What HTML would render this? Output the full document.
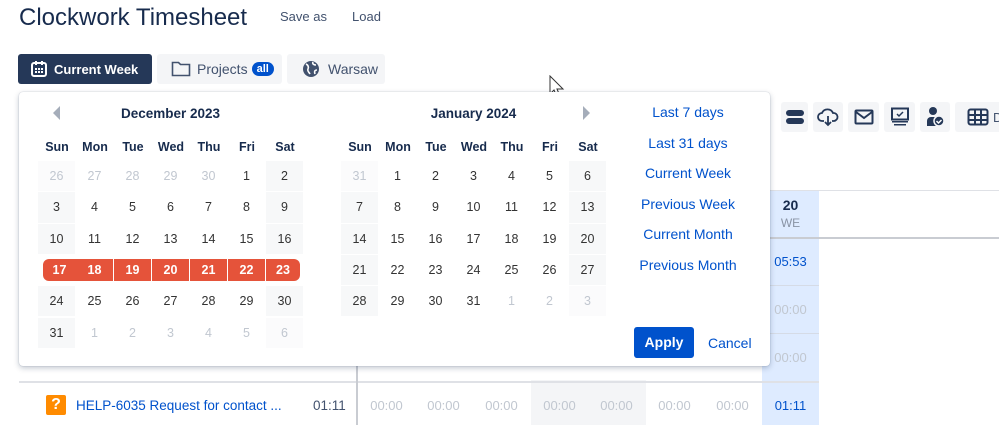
<!DOCTYPE html>
<html><head><meta charset="utf-8"><style>
*{box-sizing:border-box;margin:0;padding:0}
body{width:999px;height:425px;overflow:hidden;background:#fff;font-family:"Liberation Sans",sans-serif;position:relative;color:#172b4d}
.a{position:absolute}
.btn{position:absolute;top:54px;height:30px;border-radius:3px;background:#f4f5f7;font-size:14px;color:#42526e;display:flex;align-items:center;padding-left:12px}
.ib{position:absolute;top:102px;height:30px;width:30px;background:#f4f5f7;border-radius:3px;display:flex;align-items:center;justify-content:center}
.cell{position:absolute;display:flex;align-items:center;justify-content:center;font-size:12.5px;color:#333}
.hd{position:absolute;font-size:12.5px;font-weight:bold;color:#172b4d;width:38px;text-align:center;top:140px}
.lk{position:absolute;left:622px;width:132px;text-align:center;font-size:14px;color:#0052cc}
.t{position:absolute;font-size:13px;color:#c1c7d0;width:57px;text-align:center}
</style></head><body>
<div class="a" style="left:19px;top:4px;font-size:24px;color:#172b4d">Clockwork Timesheet</div>
<div class="a" style="left:280px;top:9px;font-size:13px;color:#42526e">Save as</div>
<div class="a" style="left:352px;top:9px;font-size:13px;color:#42526e">Load</div>
<div class="btn" style="left:18px;width:134px;background:#253858;color:#fff;font-weight:bold;font-size:13px">
<svg width="18" height="18" viewBox="0 0 18 18" style="margin-right:6px"><rect x="2" y="3" width="14" height="13" rx="2" fill="none" stroke="#fff" stroke-width="2"/><rect x="5" y="1" width="2" height="4" fill="#fff"/><rect x="11" y="1" width="2" height="4" fill="#fff"/><g fill="#fff"><rect x="5" y="8" width="2" height="2"/><rect x="8" y="8" width="2" height="2"/><rect x="11" y="8" width="2" height="2"/><rect x="5" y="11" width="2" height="2"/><rect x="8" y="11" width="2" height="2"/><rect x="11" y="11" width="2" height="2"/></g></svg>Current Week</div>
<div class="btn" style="left:157px;width:125px;padding-left:14px">
<svg width="20" height="18" viewBox="0 0 20 18" style="margin-right:6px"><path d="M1.5 2.5h6l2 2h9v11h-17z" fill="none" stroke="#42526e" stroke-width="1.6"/></svg>Projects<span style="background:#0052cc;color:#fff;border-radius:8px;font-size:11px;font-weight:bold;padding:1px 5px;margin-left:4px">all</span></div>
<div class="btn" style="left:287px;width:98px;padding-left:15px">
<svg width="18" height="18" viewBox="0 0 18 18" style="margin-right:8px"><circle cx="9" cy="9" r="8" fill="#42526e"/><path d="M4 4c2 1 3 3 2 5s1 3 2 5M11 2c-1 2 1 3 3 3M15 10c-2 0-3 1-2 4" stroke="#fff" stroke-width="1.6" fill="none"/></svg>Warsaw</div>
<svg class="a" style="left:549px;top:75px" width="16" height="24" viewBox="0 0 16 24"><path d="M1 1v18l4-4 3 7 3-1-3-7h6z" fill="#fff" stroke="#333" stroke-width="1"/></svg>
<div class="ib" style="left:781px;width:27px"><svg width="20" height="16"><rect x="1" y="1" width="18" height="6" rx="3" fill="#253858"/><rect x="1" y="9" width="18" height="6" rx="3" fill="#253858"/></svg></div>
<div class="ib" style="left:813px"><svg width="22" height="20" viewBox="0 0 22 20"><path d="M7 14H5a4 4 0 0 1 0-8 6 6 0 0 1 11 0 4 4 0 0 1 1 8h-2" fill="none" stroke="#253858" stroke-width="1.8"/><path d="M11 9v9M8 15l3 3 3-3" fill="none" stroke="#253858" stroke-width="1.8"/></svg></div>
<div class="ib" style="left:848px;width:31px"><svg width="20" height="16"><rect x="1.5" y="1.5" width="17" height="13" rx="1" fill="none" stroke="#253858" stroke-width="2"/><path d="M2 3l8 6 8-6" fill="none" stroke="#253858" stroke-width="2"/></svg></div>
<div class="ib" style="left:884px;width:31px"><svg width="20" height="20"><rect x="2" y="1.5" width="16" height="11" fill="none" stroke="#253858" stroke-width="2"/><path d="M7 7l2 2 4-4" stroke="#253858" fill="none" stroke-width="1.5"/><rect x="2" y="14" width="16" height="1.5" fill="#253858"/><rect x="4" y="17" width="12" height="1.5" fill="#253858"/></svg></div>
<div class="ib" style="left:920px"><svg width="20" height="22"><circle cx="8" cy="5" r="4" fill="#253858"/><path d="M2 20v-5a4 4 0 0 1 4-4h5v9z" fill="#253858"/><circle cx="14" cy="15" r="5" fill="#253858" stroke="#f4f5f7" stroke-width="1.5"/><path d="M11.5 15l2 2 3-3" stroke="#fff" fill="none" stroke-width="1.5"/></svg></div>
<div class="ib" style="left:955px;width:50px;justify-content:flex-start;padding-left:12px"><svg width="22" height="18"><rect x="1.5" y="1.5" width="19" height="15" rx="2" fill="none" stroke="#253858" stroke-width="2"/><path d="M1 7h20M1 12h20M8 2v14M14 2v14" stroke="#253858" stroke-width="2"/></svg><span style="font-size:13px;color:#42526e;margin-left:4px">D</span></div>
<div class="a" style="left:762px;top:190px;width:57px;height:235px;background:#deebff"></div>
<div class="a" style="left:531px;top:380px;width:115px;height:45px;background:#f4f5f7"></div>
<div class="a" style="left:770px;top:190px;width:229px;height:1px;background:#dfe1e6"></div>
<div class="a" style="left:770px;top:237px;width:229px;height:2px;background:#c9ccd2"></div>
<div class="a" style="left:770px;top:285px;width:49px;height:1px;background:#d5dbe6"></div>
<div class="a" style="left:770px;top:333px;width:49px;height:1px;background:#d5dbe6"></div>
<div class="a" style="left:19px;top:381px;width:800px;height:2px;background:#dfe1e6"></div>
<div class="a" style="left:356px;top:360px;width:2px;height:65px;background:#c9ccd2"></div>
<div class="a" style="left:762px;top:197px;width:57px;text-align:center;font-size:14px;font-weight:bold;color:#172b4d">20</div>
<div class="a" style="left:762px;top:216px;width:57px;text-align:center;font-size:12px;color:#8993a4">WE</div>
<div class="t" style="left:762px;top:254px;color:#0052cc">05:53</div>
<div class="t" style="left:762px;top:302px">00:00</div>
<div class="t" style="left:762px;top:350px">00:00</div>
<div class="a" style="left:46px;top:395px;width:20px;height:20px;background:#ff8b00;border-radius:2px;color:#fff;font-weight:bold;font-size:16px;text-align:center;line-height:20px">?</div>
<div class="a" style="left:76px;top:398px;font-size:13.5px;color:#0052cc">HELP-6035 Request for contact ...</div>
<div class="a" style="left:313px;top:398px;font-size:13.5px;color:#42526e">01:11</div>
<div id="tr"></div>
<div class="a" style="left:19px;top:92px;width:751px;height:274px;background:#fff;border-radius:4px;box-shadow:0 2px 6px rgba(9,30,66,.25),0 0 1px rgba(9,30,66,.3)"></div>
<svg class="a" style="left:53px;top:106px" width="8" height="14"><path d="M7 0v14L0 7z" fill="#a5adba"/></svg>
<svg class="a" style="left:582px;top:106px" width="8" height="14"><path d="M1 0v14l7-7z" fill="#a5adba"/></svg>
<div class="a" style="left:38px;top:106px;width:265px;text-align:center;font-size:13.5px;font-weight:bold">December 2023</div>
<div class="a" style="left:341px;top:106px;width:265px;text-align:center;font-size:13.5px;font-weight:bold">January 2024</div>
<div id="cal"></div>
<div class="lk" style="top:104px">Last 7 days</div>
<div class="lk" style="top:135px">Last 31 days</div>
<div class="lk" style="top:165px">Current Week</div>
<div class="lk" style="top:196px">Previous Week</div>
<div class="lk" style="top:226px">Current Month</div>
<div class="lk" style="top:257px">Previous Month</div>
<div class="a" style="left:634px;top:327px;width:60px;height:31px;background:#0052cc;border-radius:3px;color:#fff;font-weight:bold;font-size:14px;text-align:center;line-height:31px">Apply</div>
<div class="a" style="left:708px;top:335px;font-size:14px;color:#0052cc">Cancel</div>
<script>
var days=["Sun","Mon","Tue","Wed","Thu","Fri","Sat"],h="";
function grid(x0,data){
 days.forEach(function(d,i){h+='<div class="hd" style="left:'+(x0+i*38)+'px">'+d+'</div>'});
 data.forEach(function(row,r){row.forEach(function(c,i){
  var y=161+r*31.3,x=x0+i*38,bg=(i==0||i==6)?'#f7f8f9':'#fff',col=c[1]?'#333':'#c1c7d0',ex='';
  if(!c[1]&&(i==0||i==6))bg='#fbfbfc';
  if(c[2]){bg='#e5533a';col='#fff';ex='font-weight:bold;';if(i==0)ex+='border-radius:6px 0 0 6px;';if(i==6)ex+='border-radius:0 6px 6px 0;';}
  h+='<div class="cell" style="left:'+(x+(c[2]?(i==0?5:0):0))+'px;top:'+(y+(c[2]?4:0))+'px;width:'+(c[2]?(i==0?33:(i==6?34:37)):37)+'px;height:'+(c[2]?22:30.3)+'px;background:'+bg+';color:'+col+';'+ex+'">'+c[0]+'</div>';
 })});
}
function mk(start,prevLast,len,rows,sel){var a=[],d=1-start;for(var r=0;r<rows;r++){var row=[];for(var i=0;i<7;i++,d++){if(d<1)row.push([prevLast+d,0]);else if(d>len)row.push([d-len,0]);else row.push([d,1,sel&&d>=17&&d<=23]);}a.push(row)}return a}
grid(38,mk(5,30,31,6,1));
grid(341,mk(1,31,31,5,0));
document.getElementById('cal').innerHTML=h;
var t="",xs=[358,415,473,531,588,646,704];xs.forEach(function(x){t+='<div class="t" style="left:'+x+'px;top:398px">00:00</div>'});
t+='<div class="t" style="left:762px;top:398px;color:#0052cc">01:11</div>';
document.getElementById('tr').innerHTML=t;
</script>
</body></html>
